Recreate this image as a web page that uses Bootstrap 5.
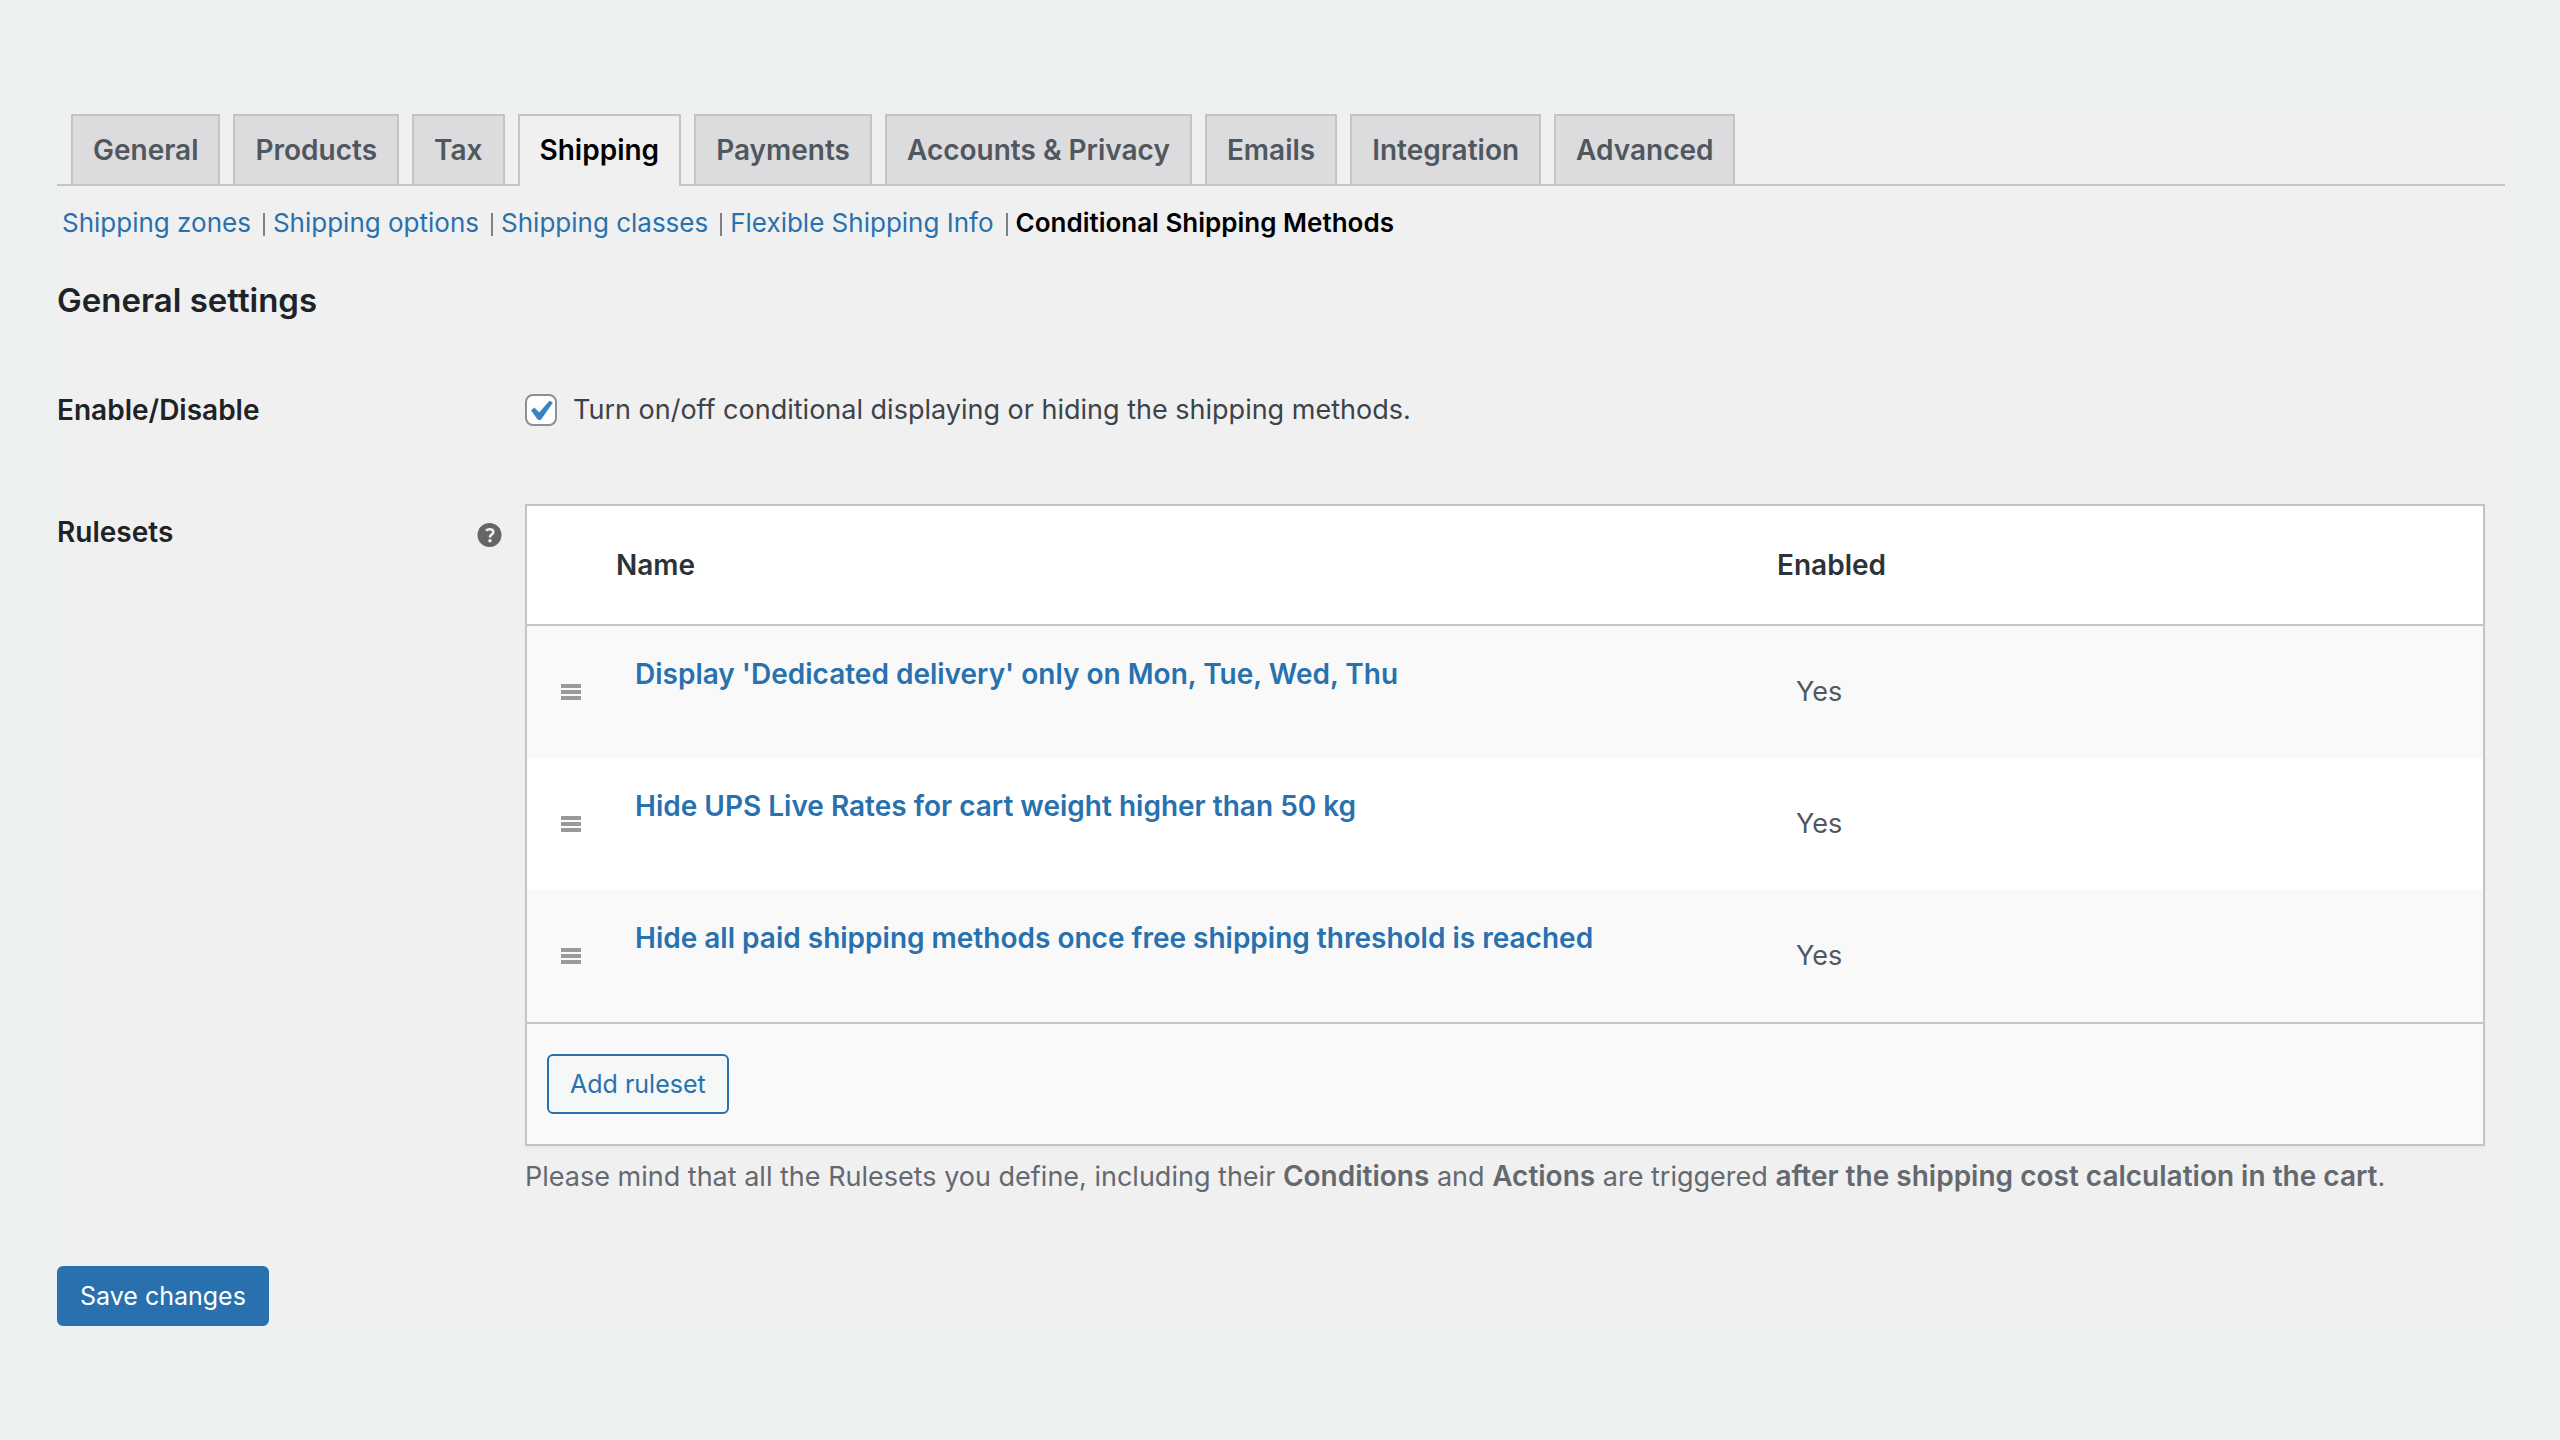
<!DOCTYPE html>
<html lang="en">
<head>
<meta charset="utf-8">
<meta name="viewport" content="width=device-width, initial-scale=1">
<title>Shipping settings</title>
<link rel="stylesheet" href="https://cdn.jsdelivr.net/npm/bootstrap@5.3.0/dist/css/bootstrap.min.css">
<style>
:root { --line: #c3c4c4; --blue: #2871ae; --panel: #f0f0f0; }
body { background: #ecf0f1; color: #3c434a; font: 400 27px/40px Inter, "Liberation Sans", sans-serif; }
a { color: var(--blue); text-decoration: none; }
strong { font-size: 28px; font-weight: 600; }
.page-pad { padding: 114px 55px 114px 57px; }
.panel { background: var(--panel); }
.settings-tabs { border-bottom: 2px solid var(--line); padding-left: 14px; gap: 13px; }
.settings-tabs .nav-link { border: 2px solid var(--line); border-bottom: 0; border-radius: 0; background: #dcdcde; color: #50575e; font-size: 28px; font-weight: 600; padding: 14px 20px; line-height: 40px; }
.settings-tabs .nav-link.active { background: var(--panel); color: #000; border-color: var(--line); margin-bottom: -2px; padding-bottom: 16px; }
.sub-links { font-size: 26px; padding: 17px 5px 0; color: #646970; }
.sub-links .current { color: #000; font-weight: 600; }
.sub-links li + li::before { content: ""; display: inline-block; width: 2px; height: 23px; margin: 0 8px 0 12px; background: #7d8084; vertical-align: -4px; }
.section-title { font-size: 33px; font-weight: 600; line-height: 44px; color: #1d2327; margin: 35px 0 0; }
.enable-line { margin-top: 68px; }
.rules-line { margin-top: 74px; }
.rules-line .setting-name { padding-top: 8px; }
.setting-name { flex: 0 0 468px; color: #1d2327; font-size: 28px; font-weight: 600; padding-right: 23px; }
.setting-field { padding-right: 20px; }
.form-check-input.tick { width: 32px; height: 32px; margin: 0 16px 0 0; border: 2px solid #8c8f94; border-radius: 8px; background-color: #fff; }
.form-check-input.tick:checked { background-color: #fff; border-color: #8c8f94; background-size: 24px 24px; background-image: url("data:image/svg+xml,%3csvg xmlns='http://www.w3.org/2000/svg' viewBox='4.5 3.4 12 12'%3e%3cpath d='M14.83 4.89l1.34.94-5.81 8.38H9.02L5.78 9.67l1.34-1.25 2.57 2.4z' fill='%233582c4' stroke='%233582c4' stroke-width='.4'/%3e%3c/svg%3e"); }
.rules { border: 2px solid var(--line); background: #f9f9f9; box-shadow: 0 2px 2px rgba(0,0,0,.04); margin: 0; color: #50575e; border-collapse: separate; border-spacing: 0; table-layout: fixed; }
.rules > :not(caption) > * > * { border: 0; box-shadow: none; background: none; color: inherit; }
.rules > thead > tr > th { background: #fff; color: #2c3338; font-size: 28px; font-weight: 600; height: 120px; padding: 0 20px; vertical-align: middle; border-bottom: 2px solid var(--line); }
.rules > tbody > tr > td { height: 132px; padding: 28px 39px; vertical-align: top; }
.rules > tbody > tr:nth-child(even) > td { background: #fff; }
.rules > tbody > tr > td.mid { vertical-align: middle; }
.rules > tbody > tr > td.grip { padding: 0 0 0 34px; vertical-align: middle; }
.rules > tfoot > tr > td { border-top: 2px solid var(--line); padding: 30px 20px; }
.rules .rule-link { font-size: 28px; font-weight: 600; }
.rules .col-grip { width: 69px; }
.rules .col-name { width: 1161px; }
.act { font-size: 25px; line-height: 40px; padding: 8px 21px; border: 2px solid var(--blue); border-radius: 6px; }
.act-line { color: var(--blue); background: #f6f7f7; }
.act-fill { color: #fff; background: var(--blue); margin-top: 69px; }
.note { color: #646970; margin: 10px 0 0; }
svg { display: block; }
</style>
<script src="https://cdn.jsdelivr.net/npm/bootstrap@5.3.0/dist/js/bootstrap.bundle.min.js"></script>
</head>
<body>
<div class="page-pad">
<main class="panel">
  <nav>
    <ul class="nav settings-tabs">
      <li class="nav-item"><a class="nav-link" href="#">General</a></li>
      <li class="nav-item"><a class="nav-link" href="#">Products</a></li>
      <li class="nav-item"><a class="nav-link" href="#">Tax</a></li>
      <li class="nav-item"><a class="nav-link active" aria-current="page" href="#">Shipping</a></li>
      <li class="nav-item"><a class="nav-link" href="#">Payments</a></li>
      <li class="nav-item"><a class="nav-link" href="#">Accounts &amp; Privacy</a></li>
      <li class="nav-item"><a class="nav-link" href="#">Emails</a></li>
      <li class="nav-item"><a class="nav-link" href="#">Integration</a></li>
      <li class="nav-item"><a class="nav-link" href="#">Advanced</a></li>
    </ul>
    <ul class="sub-links list-unstyled d-flex flex-wrap m-0">
      <li><a href="#">Shipping zones</a></li>
      <li><a href="#">Shipping options</a></li>
      <li><a href="#">Shipping classes</a></li>
      <li><a href="#">Flexible Shipping Info</a></li>
      <li><a class="current" href="#">Conditional Shipping Methods</a></li>
    </ul>
  </nav>
  <form>
    <h2 class="section-title">General settings</h2>
    <div class="d-flex enable-line">
      <div class="setting-name">Enable/Disable</div>
      <div class="setting-field flex-grow-1 d-flex align-items-center">
        <input class="form-check-input tick" type="checkbox" id="enable" checked>
        <label for="enable">Turn on/off conditional displaying or hiding the shipping methods.</label>
      </div>
    </div>
    <div class="d-flex rules-line">
      <div class="setting-name d-flex justify-content-between">
        <span>Rulesets</span>
        <svg width="25" height="40" viewBox="0 0 25 40" role="img" aria-label="Help"><circle cx="12.5" cy="23" r="12" fill="#666"/><path d="M8.9 18.6c1.200-1 2.500-1.400 3.900-1.400 2.200 0 3.500 1 3.500 2.700 0 1.400-.8 2.100-1.800 2.800-.9.700-1.500 1.100-1.500 2.400v.5" fill="none" stroke="#f0f0f0" stroke-width="2.600"/><circle cx="13" cy="28.700" r="1.800" fill="#f0f0f0"/></svg>
      </div>
      <div class="setting-field flex-grow-1">
        <table class="table rules">
          <colgroup><col class="col-grip"><col class="col-name"><col></colgroup>
          <thead><tr><th></th><th scope="col">Name</th><th scope="col">Enabled</th></tr></thead>
          <tbody>
            <tr><td class="grip"><svg width="20" height="16" fill="#999"><path d="M0 0h20v4H0zM0 6h20v4H0zM0 12h20v4H0z"/></svg></td><td><a class="rule-link" href="#">Display 'Dedicated delivery' only on Mon, Tue, Wed, Thu</a></td><td class="mid">Yes</td></tr>
            <tr><td class="grip"><svg width="20" height="16" fill="#999"><path d="M0 0h20v4H0zM0 6h20v4H0zM0 12h20v4H0z"/></svg></td><td><a class="rule-link" href="#">Hide UPS Live Rates for cart weight higher than 50 kg</a></td><td class="mid">Yes</td></tr>
            <tr><td class="grip"><svg width="20" height="16" fill="#999"><path d="M0 0h20v4H0zM0 6h20v4H0zM0 12h20v4H0z"/></svg></td><td><a class="rule-link" href="#">Hide all paid shipping methods once free shipping threshold is reached</a></td><td class="mid">Yes</td></tr>
          </tbody>
          <tfoot><tr><td colspan="3"><button type="button" class="btn act act-line">Add ruleset</button></td></tr></tfoot>
        </table>
        <p class="note">Please mind that all the Rulesets you define, including their <strong>Conditions</strong> and <strong>Actions</strong> are triggered <strong>after the shipping cost calculation in the cart</strong>.</p>
      </div>
    </div>
    <button type="submit" class="btn act act-fill d-block">Save changes</button>
  </form>
</main>
</div>
</body>
</html>
